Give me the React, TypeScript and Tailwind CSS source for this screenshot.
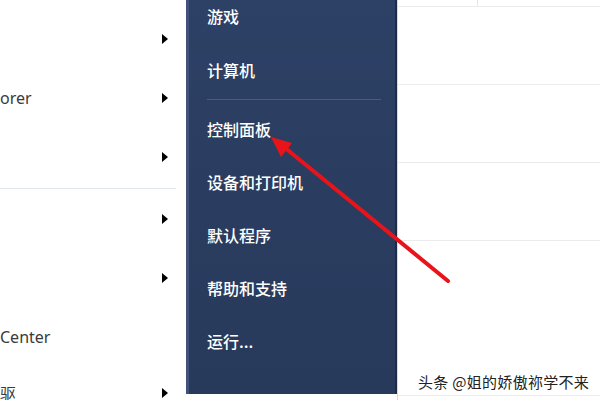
import React from 'react';

const leftRows: { text?: string; arrow: boolean; h: string }[] = [
  { arrow: true, h: 'h-[59px]' },
  { text: 'orer', arrow: true, h: 'h-[59px]' },
  { arrow: true, h: 'h-[59px]' },
];

const leftRows2: { text?: string; arrow: boolean; cjk?: boolean }[] = [
  { arrow: true },
  { arrow: true },
  { text: 'Center', arrow: false },
  { text: '驱', arrow: true, cjk: true },
];

const menuTop = ['游戏', '计算机'];
const menuBottom = ['控制面板', '设备和打印机', '默认程序', '帮助和支持', '运行...'];

const Tri = () => (
  <div className="w-0 h-0 border-y-[5px] border-y-transparent border-l-[6px] border-l-black" />
);

const LeftRow = ({ text, arrow, cjk, h }: { text?: string; arrow: boolean; cjk?: boolean; h: string }) => (
  <div className={`${h} shrink-0 flex items-center justify-between pr-[18px]`}>
    <span
      className={`text-[16px] text-[#3a3a3a] ${
        cjk ? "font-['Noto_Sans_CJK_SC',sans-serif]" : "font-['Noto_Sans',sans-serif]"
      }`}
    >
      {text}
    </span>
    {arrow && <Tri />}
  </div>
);

export default function App() {
  return (
    <div className="relative w-[600px] h-[400px] overflow-hidden bg-white flex font-['Noto_Sans_CJK_SC',sans-serif]">
      {/* left column of the start menu */}
      <div className="w-[186px] flex-shrink-0 flex flex-col pt-[9px]">
        {leftRows.map((r, i) => (
          <LeftRow key={i} {...r} />
        ))}
        <div className="h-px shrink-0 mt-[2px] mr-[10px] bg-[#e2e7ee]" />
        {leftRows2.map((r, i) => (
          <LeftRow key={i} {...r} h={i === 3 ? 'h-[54px]' : 'h-[59px]'} />
        ))}
      </div>

      {/* dark right pane */}
      <div className="w-[211px] h-[394px] flex-shrink-0 flex flex-col bg-gradient-to-b from-[#2d4166] via-[#2a3d60] to-[#283a5b] border-l-[3px] border-l-[#40527a] border-r-[2px] border-r-[#1e2c47] pl-[18px]">
        <div className="-mt-[11px] shrink-0">
          {menuTop.map((t) => (
            <div key={t} className="h-[54px] flex items-center text-white text-[16px] font-medium">
              {t}
            </div>
          ))}
        </div>
        <div className="h-px shrink-0 mt-[2px] mr-[14px] bg-[#4a5b7d]" />
        <div className="mt-[2px] shrink-0">
          {menuBottom.map((t) => (
            <div key={t} className="h-[53px] flex items-center text-white text-[16px] font-medium">
              {t}
            </div>
          ))}
        </div>
      </div>

      {/* background window on the right */}
      <div className="flex-1 flex flex-col border-l border-l-[#d6d9de]">
        <div className="h-[6px] shrink-0 flex">
          <div className="w-[80px] border-r border-r-[#e6e6e6]" />
        </div>
        <div className="h-[78px] shrink-0 border-t border-t-[#ececec]" />
        <div className="h-[78px] shrink-0 border-t border-t-[#ececec]" />
        <div className="h-[78px] shrink-0 border-t border-t-[#ececec]" />
        <div className="h-[155px] shrink-0 border-t border-t-[#ececec]" />
        <div className="flex-1 border-t border-t-[#ececec]" />
      </div>

      {/* red arrow annotation */}
      <svg className="absolute inset-0 pointer-events-none" width="600" height="400" viewBox="0 0 600 400">
        <line x1="448" y1="281" x2="284" y2="147" stroke="#e8141a" strokeWidth="4" strokeLinecap="round" />
        <polygon points="271,137 281,157 292,143" fill="#e8141a" />
      </svg>

      {/* watermark */}
      <div className="absolute left-[418px] top-[371px] text-[15px] tracking-[0.3px] text-[#222] [text-shadow:0_0_2px_#fff,0_0_2px_#fff]">
        头条 @姐的娇傲祢学不来
      </div>
    </div>
  );
}
